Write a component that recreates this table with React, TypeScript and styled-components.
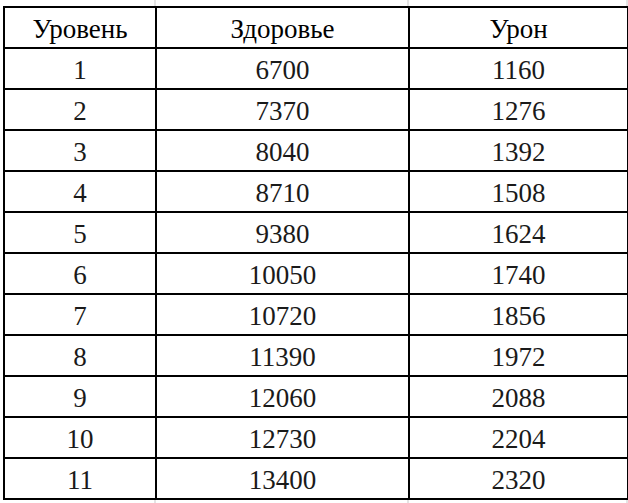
import styled, { createGlobalStyle } from "styled-components";

type Row = {
	level: number;
	health: number;
	damage: number;
};

const rows: Row[] = [
	{ level: 1, health: 6700, damage: 1160 },
	{ level: 2, health: 7370, damage: 1276 },
	{ level: 3, health: 8040, damage: 1392 },
	{ level: 4, health: 8710, damage: 1508 },
	{ level: 5, health: 9380, damage: 1624 },
	{ level: 6, health: 10050, damage: 1740 },
	{ level: 7, health: 10720, damage: 1856 },
	{ level: 8, health: 11390, damage: 1972 },
	{ level: 9, health: 12060, damage: 2088 },
	{ level: 10, health: 12730, damage: 2204 },
	{ level: 11, health: 13400, damage: 2320 },
];

function App() {
	return (
		<>
			<GlobalStyle />
			<Sheet>
				<StatsTable>
					<colgroup>
						<col style={{ width: "152px" }} />
						<col style={{ width: "253px" }} />
						<col style={{ width: "219px" }} />
					</colgroup>
					<thead>
						<tr>
							<HeadCell>Уровень</HeadCell>
							<HeadCell>Здоровье</HeadCell>
							<HeadCell>Урон</HeadCell>
						</tr>
					</thead>
					<tbody>
						{rows.map((row) => {
							return (
								<tr key={row.level}>
									<Cell>{row.level}</Cell>
									<Cell>{row.health}</Cell>
									<Cell>{row.damage}</Cell>
								</tr>
							);
						})}
					</tbody>
				</StatsTable>
			</Sheet>
		</>
	);
}

const GlobalStyle = createGlobalStyle`
	html, body {
		margin: 0;
		padding: 0;
		background: #ffffff;
	}
`;

// faint spreadsheet gridlines peek out around the table
const Sheet = styled.div`
	width: 628px;
	height: 503px;
	box-sizing: border-box;
	padding: 6px 0 0 3px;
	overflow: hidden;
	font-family: "Liberation Serif", "Times New Roman", serif;
	font-size: 27px;
	background-color: #ffffff;
	background-image: linear-gradient(to right, transparent 154px, #e4e4e4 154px, #e4e4e4 156px, transparent 156px),
		linear-gradient(to right, transparent 407px, #e4e4e4 407px, #e4e4e4 409px, transparent 409px),
		linear-gradient(to right, transparent 626px, #e4e4e4 626px);
`;

const StatsTable = styled.table`
	width: 624px;
	table-layout: fixed;
	border-collapse: collapse;
	background: #ffffff;
	font: inherit;
`;

const HeadCell = styled.th`
	height: 41px;
	box-sizing: border-box;
	padding: 4px 0 0;
	border: 2px solid #000000;
	font: inherit;
	text-align: center;
	vertical-align: middle;
	color: #000000;
`;

const Cell = styled.td`
	height: 41px;
	box-sizing: border-box;
	padding: 4px 0 0;
	border: 2px solid #000000;
	font: inherit;
	text-align: center;
	vertical-align: middle;
	color: #1a1a1a;
`;

export default App;
